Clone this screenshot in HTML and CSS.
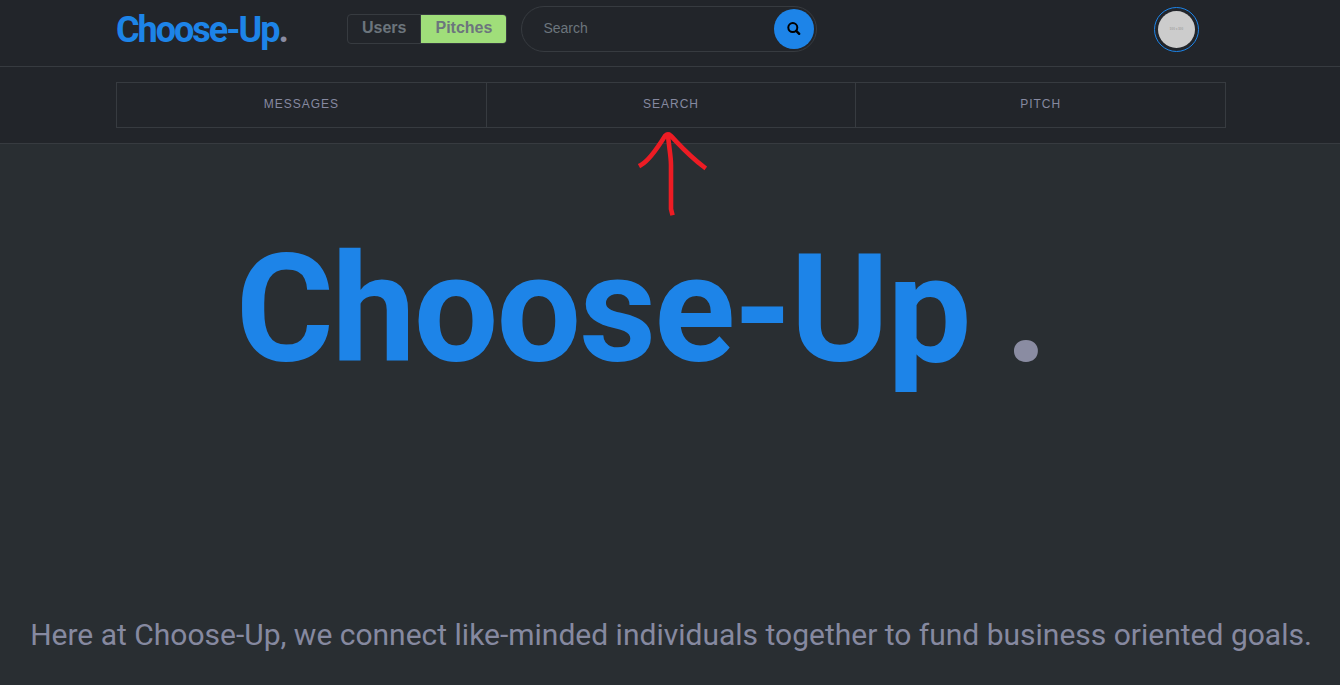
FILE: index.html
```html
<!DOCTYPE html>
<html lang="en">
<head>
<meta charset="utf-8">
<meta name="viewport" content="width=device-width, initial-scale=1">
<title>Choose-Up</title>
<link rel="stylesheet" href="styles.css">
</head>
<body>
<header class="topbar">
  <div class="container topbar-row">
    <a class="logo" href="#">Choose-Up<span class="dot">.</span></a>
    <form class="search-form">
      <div class="toggle">
        <button class="toggle-btn" type="button">Users</button>
        <button class="toggle-btn active" type="button">Pitches</button>
      </div>
      <div class="search-box">
        <input class="search-input" type="text" placeholder="Search" aria-label="Search">
        <button class="search-btn" type="submit" aria-label="Submit search">
          <svg width="14" height="14" viewBox="0 0 14 14" fill="none" stroke="currentColor" stroke-width="2"><circle cx="5.8" cy="5.6" r="4.5"/><path d="M9.2 8.8l3 3" stroke-width="2.4" stroke-linecap="round"/></svg>
        </button>
      </div>
    </form>
    <a class="avatar" href="#" aria-label="Profile"><span class="avatar-img">500 x 500</span></a>
  </div>
</header>
<nav class="subnav">
  <div class="container">
    <div class="tabs">
      <a class="tab" href="#">Messages</a>
      <a class="tab" href="#">Search</a>
      <a class="tab" href="#">Pitch</a>
      <svg class="arrow" width="72" height="88" viewBox="0 0 72 88" fill="none" stroke="#ed1c24" stroke-width="4.6" stroke-linecap="square" stroke-linejoin="round"><path d="M6 35C15 30 25 14 30 6Q33 3 36 6C43 13 52 24 69 37"/><path d="M33 5C34 18 36 26 36 35L36 79L37 83"/></svg>
    </div>
  </div>
</nav>
<main class="hero">
  <h1 class="hero-title">Choose-Up <span class="dot">.</span></h1>
  <p class="hero-text">Here at Choose-Up, we connect like-minded individuals together to fund business oriented goals.</p>
</main>
</body>
</html>
```
FILE: styles.css
```css
* { box-sizing: border-box; }
body {
  margin: 0;
  min-height: 100vh;
  background: #292e32;
  color: #8689a0;
  font-family: "Liberation Sans", Arial, sans-serif;
}
a { color: inherit; text-decoration: none; }
button, input { font: inherit; }
.container { max-width: 1142px; margin: 0 auto; padding: 0 15px 0 17px; }
.dot { color: #8a8ca2; }

.topbar { background: #22252a; border-bottom: 1px solid #373b40; }
.topbar-row { display: flex; align-items: center; height: 66px; padding-bottom: 8px; }
.logo {
  width: 231px;
  padding-top: 2px;
  color: #1d84e8;
  font: 700 36px/42px Roboto, sans-serif;
  letter-spacing: -2px;
}
.search-form { display: flex; align-items: center; gap: 14px; }
.toggle { display: flex; border: 1px solid #373b40; border-radius: 4px; overflow: hidden; }
.toggle-btn {
  padding: 0 14px 2px;
  border: 0;
  background: transparent;
  color: #6c757d;
  font-size: 16px;
  font-weight: 700;
  line-height: 26px;
}
.toggle-btn.active { background: #a0de7a; }
.toggle-btn + .toggle-btn { border-left: 1px solid #373b40; }
.search-box {
  display: flex;
  align-items: center;
  width: 296px;
  height: 46px;
  padding: 0 2px 0 21px;
  border: 1px solid #373b40;
  border-radius: 23px;
}
.search-input {
  flex: 1;
  min-width: 0;
  padding: 0 0 2px;
  border: 0;
  outline: 0;
  background: transparent;
  color: #6c757d;
  font-size: 14px;
}
.search-input::placeholder { color: #6c757d; opacity: 1; }
.search-btn {
  display: grid;
  place-items: center;
  width: 40px;
  height: 40px;
  padding: 0;
  border: 0;
  border-radius: 50%;
  background: #1d84e8;
  color: #000;
}
.avatar {
  margin-left: auto;
  margin-right: 27px;
  padding: 3px;
  border: 1px solid #1d84e8;
  border-radius: 50%;
}
.avatar-img {
  display: grid;
  place-items: center;
  width: 37px;
  height: 37px;
  border-radius: 50%;
  background: #ccc;
  color: #a4a4a4;
  font-size: 3px;
  font-weight: 700;
  white-space: nowrap;
}

.subnav { padding: 15px 0; background: #22252a; border-bottom: 1px solid #373b40; }
.tabs { position: relative; display: flex; border: 1px solid #373b40; }
.tab {
  flex: 1;
  padding: 11px 0 13px;
  font-size: 12px;
  line-height: 20px;
  letter-spacing: 1px;
  text-align: center;
  text-transform: uppercase;
}
.tab + .tab { border-left: 1px solid #373b40; }
.arrow { position: absolute; left: 50%; top: 47px; margin-left: -36px; pointer-events: none; }

.hero { text-align: center; font-family: Roboto, sans-serif; }
.hero-title {
  margin: 0;
  padding: 76px 58px 0 0;
  color: #1d84e8;
  font-size: 150px;
  line-height: 180px;
  letter-spacing: -2px;
}
.hero-text { margin: 0; padding: 215px 19px 30px 21px; font-size: 30px; line-height: 40px; }
```
